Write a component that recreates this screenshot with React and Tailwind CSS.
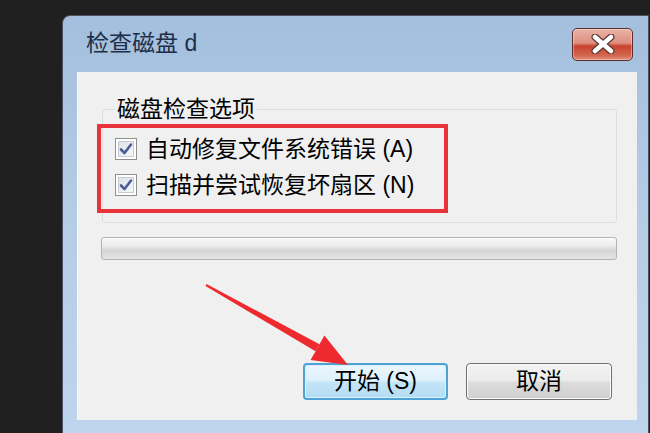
import React from "react";

const font = "font-['Liberation_Sans','Noto_Sans_CJK_SC',sans-serif]";

function CheckBox() {
  return (
    <div className="w-[22px] h-[22px] border border-[#8e8f8f] bg-white p-[2px] shrink-0">
      <div className="w-full h-full border border-[#c6cbd3] bg-linear-to-br from-[#dde3ea] to-[#f6f8fa] flex items-center justify-center">
        <svg width="14" height="14" viewBox="0 0 14 14">
          <path d="M2 7.5 L5.5 11 L12 2.5" fill="none" stroke="#4b5d94" strokeWidth="2.6" strokeLinecap="round" strokeLinejoin="round" />
        </svg>
      </div>
    </div>
  );
}

function CloseButton() {
  return (
    <div className="w-[61px] h-[33px] rounded-[5px] border border-[#5a2e2a] bg-[linear-gradient(to_bottom,#eab3a6_0%,#de8f80_45%,#c8432e_55%,#d4664e_85%,#e2927c_100%)] flex items-center justify-center shadow-[inset_0_0_0_1px_rgba(255,255,255,0.35)]">
      <svg width="26" height="20" viewBox="0 0 26 20">
        <path d="M5 3 L21 17 M21 3 L5 17" stroke="#5b3a36" strokeWidth="7" strokeLinecap="round" />
        <path d="M5 3 L21 17 M21 3 L5 17" stroke="#ffffff" strokeWidth="4.5" strokeLinecap="round" />
      </svg>
    </div>
  );
}

export default function App() {
  return (
    <div className={`w-[650px] h-[433px] bg-[#202020] overflow-hidden ${font}`}>
      {/* window */}
      <div className="ml-[62px] mt-[15px] w-[587px] h-[430px] border border-[#4a535d] rounded-tl-[8px] bg-linear-to-b from-[#a3bfdd] via-[#b6cde6] to-[#bfd5ed] flex flex-col">
        {/* title bar */}
        <div className="h-[56px] flex items-center justify-between pl-[23px] pr-[15px] shrink-0">
          <span className="text-[23px] leading-none text-[#1d2e48] pb-[2px]">检查磁盘 d</span>
          <CloseButton />
        </div>

        {/* client area */}
        <div className="relative ml-[14px] mr-[11px] h-[348px] bg-[#f0f0f0] border-l border-[#f7f9fb] flex flex-col">
          <fieldset className="mt-[25px] ml-[24px] mr-[20px] border border-[#d5dfe5] rounded-[3px] pl-[12px] pt-[10px] pb-[19px]">
            <legend className="px-[2px] text-[23px] leading-[24px] text-black">磁盘检查选项</legend>
            <div className="h-[36px] flex items-center gap-[9px]">
              <CheckBox />
              <span className="text-[23px] leading-none text-black">自动修复文件系统错误 (A)</span>
            </div>
            <div className="h-[36px] flex items-center gap-[9px]">
              <CheckBox />
              <span className="text-[23px] leading-none text-black">扫描并尝试恢复坏扇区 (N)</span>
            </div>
          </fieldset>

          {/* progress bar */}
          <div className="mt-[14px] ml-[23px] mr-[20px] h-[23px] rounded-[3px] border border-[#b3b3b3] bg-[linear-gradient(to_bottom,#f8f8f8_0%,#ececec_35%,#d6d6d6_60%,#e4e4e4_100%)] shadow-[inset_0_1px_0_#ffffff]" />

          {/* buttons */}
          <div className="mt-[103px] mr-[25px] flex justify-end gap-[18px]">
            <div className="w-[145px] h-[37px] rounded-[4px] border-2 border-[#4fa3d4] bg-[linear-gradient(to_bottom,#ecf7fd_0%,#dcf0fb_48%,#c4e5f7_52%,#b3dcf3_100%)] flex items-center justify-center shadow-[inset_0_0_0_1px_#d9f1fd]">
              <span className="text-[23px] leading-none text-black">开始 (S)</span>
            </div>
            <div className="w-[146px] h-[37px] rounded-[4px] border border-[#707070] bg-[linear-gradient(to_bottom,#f3f3f3_0%,#ebebeb_48%,#dddddd_52%,#cfcfcf_100%)] flex items-center justify-center shadow-[inset_0_0_0_1px_#fbfbfb]">
              <span className="text-[23px] leading-none text-black">取消</span>
            </div>
          </div>

          {/* annotations */}
          <div className="absolute left-[19px] top-[52px] w-[351px] h-[89px] border-[4px] border-[#e8333a]" />
          <svg className="absolute inset-0 pointer-events-none" width="560" height="348" viewBox="0 0 560 348">
            <polygon points="127.5,214 128.5,212 241.5,272.3 237.5,279.3" fill="#ee2a2e" />
            <polygon points="270,293 232.6,288 246.4,263.6" fill="#ee2a2e" />
          </svg>
        </div>
      </div>
    </div>
  );
}
